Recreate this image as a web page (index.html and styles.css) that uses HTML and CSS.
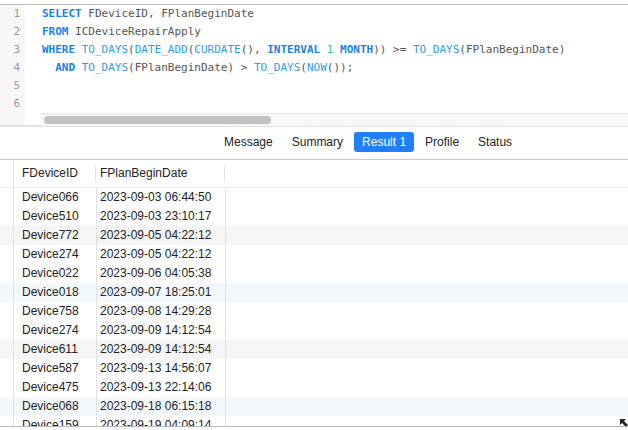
FILE: index.html
```html
<!DOCTYPE html>
<html>
<head>
<meta charset="utf-8">
<link rel="stylesheet" href="styles.css">
</head>
<body>
<div class="app">
  <div class="editor">
    <div class="gutter">
      <div>1</div><div>2</div><div>3</div><div>4</div><div>5</div><div>6</div>
    </div>
    <div class="code-wrap">
      <div class="code">
        <div class="ln"><span class="kw">SELECT</span> FDeviceID, FPlanBeginDate</div>
        <div class="ln"><span class="kw">FROM</span> ICDeviceRepairApply</div>
        <div class="ln"><span class="kw">WHERE</span> <span class="fn">TO_DAYS</span>(<span class="fn">DATE_ADD</span>(<span class="fn">CURDATE</span>(), <span class="kw">INTERVAL</span> <span class="num">1</span> <span class="kw">MONTH</span>)) &gt;= <span class="fn">TO_DAYS</span>(FPlanBeginDate)</div>
        <div class="ln">  <span class="kw">AND</span> <span class="fn">TO_DAYS</span>(FPlanBeginDate) &gt; <span class="fn">TO_DAYS</span>(<span class="fn">NOW</span>());</div>
        <div class="ln"> </div>
        <div class="ln"> </div>
      </div>
      <div class="hscroll"><div class="thumb"></div></div>
    </div>
  </div>
  <div class="tabs">
    <span class="tab">Message</span>
    <span class="tab">Summary</span>
    <span class="tab active">Result 1</span>
    <span class="tab">Profile</span>
    <span class="tab">Status</span>
  </div>
  <div class="grid">
    <div class="row head">
      <div class="rn"></div><div class="c1">FDeviceID</div><div class="c2">FPlanBeginDate</div><div class="c3"></div>
    </div>
    <div class="body">
      <div class="row"><div class="rn"></div><div class="c1">Device066</div><div class="c2">2023-09-03 06:44:50</div><div class="c3"></div></div>
      <div class="row"><div class="rn"></div><div class="c1">Device510</div><div class="c2">2023-09-03 23:10:17</div><div class="c3"></div></div>
      <div class="row gray"><div class="rn"></div><div class="c1">Device772</div><div class="c2">2023-09-05 04:22:12</div><div class="c3"></div></div>
      <div class="row"><div class="rn"></div><div class="c1">Device274</div><div class="c2">2023-09-05 04:22:12</div><div class="c3"></div></div>
      <div class="row"><div class="rn"></div><div class="c1">Device022</div><div class="c2">2023-09-06 04:05:38</div><div class="c3"></div></div>
      <div class="row blue"><div class="rn"></div><div class="c1">Device018</div><div class="c2">2023-09-07 18:25:01</div><div class="c3"></div></div>
      <div class="row"><div class="rn"></div><div class="c1">Device758</div><div class="c2">2023-09-08 14:29:28</div><div class="c3"></div></div>
      <div class="row"><div class="rn"></div><div class="c1">Device274</div><div class="c2">2023-09-09 14:12:54</div><div class="c3"></div></div>
      <div class="row gray"><div class="rn"></div><div class="c1">Device611</div><div class="c2">2023-09-09 14:12:54</div><div class="c3"></div></div>
      <div class="row"><div class="rn"></div><div class="c1">Device587</div><div class="c2">2023-09-13 14:56:07</div><div class="c3"></div></div>
      <div class="row"><div class="rn"></div><div class="c1">Device475</div><div class="c2">2023-09-13 22:14:06</div><div class="c3"></div></div>
      <div class="row blue"><div class="rn"></div><div class="c1">Device068</div><div class="c2">2023-09-18 06:15:18</div><div class="c3"></div></div>
      <div class="row"><div class="rn"></div><div class="c1">Device159</div><div class="c2">2023-09-19 04:09:14</div><div class="c3"></div></div>
    </div>
    <svg class="cursor" width="8" height="8" viewBox="0 0 8 8"><path d="M0 0 L6 0 L4 2 L8 6 L6 8 L2 4 L0 6 Z" fill="#222"/></svg>
  </div>
</div>
</body>
</html>
```

FILE: styles.css
```css
* { box-sizing: border-box; }
html, body { margin: 0; padding: 0; background: #fff; }
body { width: 628px; height: 430px; overflow: hidden; }
.app {
  display: flex;
  flex-direction: column;
  height: 430px;
  padding-top: 4px;
  font-family: "Liberation Sans", Arial, sans-serif;
  font-size: 12px;
  color: #222;
}
.editor {
  display: flex;
  border-top: 1px solid #bdbdbd;
  border-bottom: 2px solid #e2e2e2;
  height: 123px;
  flex-shrink: 0;
}
.gutter {
  width: 25px;
  background: #f7f7f7;
  font-family: "DejaVu Sans Mono", monospace;
  font-size: 11px;
  color: #9a9a9a;
  text-align: right;
  padding-right: 5px;
}
.gutter div { height: 18px; line-height: 18px; }
.code-wrap {
  flex: 1;
  display: flex;
  flex-direction: column;
  padding-left: 16px;
}
.code {
  flex: 1;
  padding-left: 1px;
  font-family: "DejaVu Sans Mono", monospace;
  font-size: 11px;
  color: #555;
}
.ln { height: 18px; line-height: 18px; white-space: pre; }
.kw { color: #1b7fe3; font-weight: bold; }
.fn { color: #2f9be3; }
.num { color: #2fc46f; }
.hscroll {
  height: 14px;
  background: #f6f6f6;
  border-top: 1px solid #e6e6e6;
  padding: 2px 3px;
}
.thumb {
  width: 227px;
  height: 8px;
  border-radius: 4px;
  background: #c2c2c2;
}
.tabs {
  display: flex;
  align-items: center;
  gap: 3px;
  height: 33px;
  flex-shrink: 0;
  padding-left: 216px;
  padding-bottom: 2px;
  border-bottom: 1px solid #c9c9c9;
  font-size: 12px;
  color: #222;
}
.tab {
  height: 20px;
  line-height: 20px;
  padding: 0 8px;
  border-radius: 3px;
}
.tab.active { background: #1f7ff5; color: #fff; }
.grid {
  position: relative;
  flex: 1;
  display: flex;
  flex-direction: column;
  border-bottom: 1px solid #b8b8b8;
  margin-bottom: 3px;
  overflow: hidden;
}
.row {
  display: flex;
  height: 19px;
  line-height: 19px;
  flex-shrink: 0;
}
.rn { width: 14px; border-right: 1px solid #e2e2e2; flex-shrink: 0; }
.c1 { width: 83px; padding-left: 8px; border-right: 1px solid #e2e2e2; flex-shrink: 0; }
.c2 { width: 129px; padding-left: 3px; border-right: 1px solid #e2e2e2; flex-shrink: 0; }
.c3 { flex: 1; }
.row.head {
  height: 28px;
  line-height: 26px;
  border-bottom: 1px solid #ececec;
}
.head .c1, .head .c2 {
  border-right-color: transparent;
  background-image: linear-gradient(#e2e2e2, #e2e2e2);
  background-repeat: no-repeat;
  background-size: 1px 17px;
  background-position: right 5px;
}
.body { flex: 1; display: flex; flex-direction: column; }
.row.gray { background: #f5f5f5; }
.row.blue { background: #f3f8fd; }
.cursor { position: absolute; right: 0; bottom: -1px; }
```
